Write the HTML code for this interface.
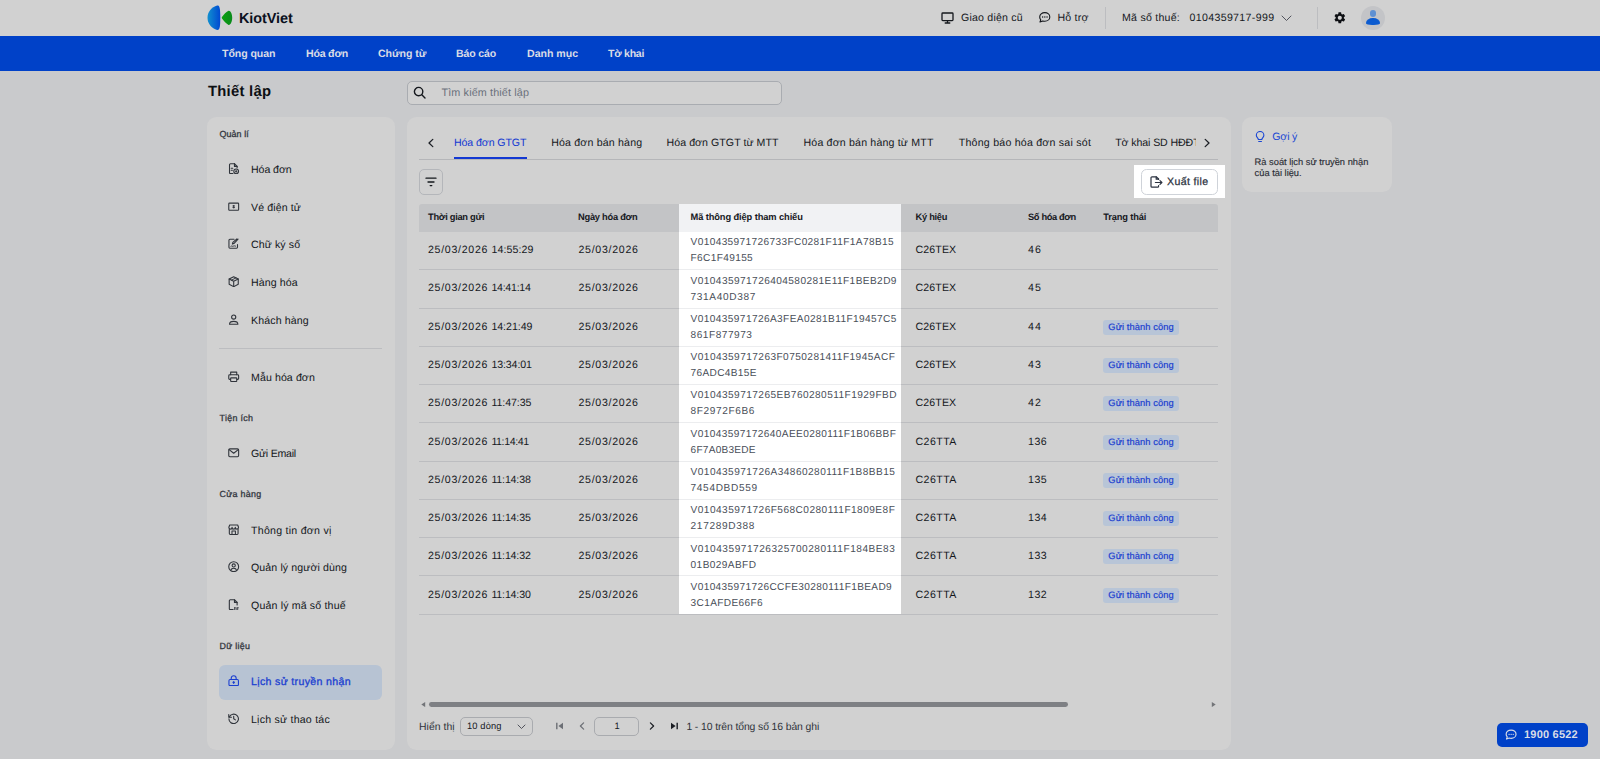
<!DOCTYPE html>
<html lang="vi">
<head>
<meta charset="utf-8">
<title>KiotViet - Thiết lập</title>
<style>
*{box-sizing:border-box;margin:0;padding:0}
html,body{width:1600px;height:759px;overflow:hidden}
body{background:#c9cacc;font-family:"Liberation Sans",sans-serif;text-rendering:geometricPrecision;color:#14171c;position:relative;font-size:10.6px}
.abs{position:absolute}
.t{position:absolute;white-space:nowrap;line-height:1}
/* header */
#hdr{position:absolute;left:0;top:0;width:1600px;height:36px;background:#d1d1d1}
#nav{position:absolute;left:0;top:36px;width:1600px;height:35.4px;background:#0041c8}
#nav .t{color:#d9dce6;font-weight:bold;font-size:10.6px;top:13px}
.card{position:absolute;z-index:0}
.card::before{content:"";position:absolute;left:0;right:0;top:-0.45px;bottom:0;background:#d1d1d1;border-radius:9.5px;z-index:-1}
/* sidebar */
.sec{position:absolute;left:12.5px;font-size:8.9px;color:#33373e;-webkit-text-stroke:0.3px #33373e;white-space:nowrap;line-height:1;letter-spacing:-0.2px}
.mi{position:absolute;left:12px;width:163px;height:35px;border-radius:6px}
.mi .lb{position:absolute;left:32px;top:12.5px;font-size:10.6px;line-height:1;white-space:nowrap;color:#14171c}
.mi svg{position:absolute;left:9.4px;top:10.4px;width:11.4px;height:11.4px;stroke:#30343b;fill:none;stroke-width:1.15;stroke-linecap:round;stroke-linejoin:round}
.mi.on{background:#b7c3d3}
.mi.on .lb{color:#1b3fd0;-webkit-text-stroke:0.3px #1b3fd0}
.mi.on svg{stroke:#1b3fd0}
.tab{position:absolute;top:11px;font-size:10.6px;line-height:1;white-space:nowrap;color:#15181d}
.tab.on{color:#1338d2}
/* table */
.th{position:absolute;top:0;height:27.6px;line-height:27.6px;font-size:9.3px;font-weight:bold;color:#17191e;white-space:nowrap;letter-spacing:-0.15px}
.row{position:absolute;left:0;width:799px;border-bottom:1px solid #bcbdc0}
.c{position:absolute;white-space:nowrap;font-size:10.6px;line-height:16.2px;color:#15181d}
.code{position:absolute;left:271.6px;font-size:10.1px;line-height:16px;color:#4a4f59;white-space:nowrap}
.bdg{position:absolute;-webkit-text-stroke:0.2px #1a40d0;left:684.3px;letter-spacing:0.1px;height:15px;width:75.6px;border-radius:3px;background:#b8c5d7;color:#1a40d0;font-size:9.3px;line-height:15px;text-align:center;white-space:nowrap}
</style>
</head>
<body>
<!-- HEADER -->
<div id="hdr">
  <svg class="abs" style="left:207px;top:5px" width="26" height="26" viewBox="0 0 26 26">
    <defs>
      <linearGradient id="lgb" x1="0" y1="0" x2="1" y2="0"><stop offset="0" stop-color="#1190cf"/><stop offset="1" stop-color="#0049d2"/></linearGradient>
      <linearGradient id="lgg" x1="0" y1="0" x2="1" y2="0"><stop offset="0" stop-color="#0aa010"/><stop offset="1" stop-color="#0b8a1c"/></linearGradient>
    </defs>
    <path d="M10.2 0.6 C12.4 0.4 13.3 2.5 13.3 12.8 C13.3 23 12.4 25.2 10.2 25 C4.6 23.6 0.5 18.6 0.5 12.8 C0.5 7 4.6 2 10.2 0.6Z" fill="url(#lgb)"/>
    <path d="M15 12.1 C16.5 9.8 19.5 6.6 21.6 5.8 C23.4 5.4 25.2 8.6 25.2 12.8 C25.2 17 23.4 20.3 21.6 19.9 C19.5 19.1 16.5 15.9 15 13.6 C14.6 13 14.6 12.7 15 12.1Z" fill="url(#lgg)"/>
  </svg>
  <div class="t" style="left:239px;top:11.5px;font-size:14.4px;font-weight:bold;color:#0a1020;letter-spacing:-0.06px">KiotViet</div>
  <svg class="abs" style="left:941px;top:11.5px" width="13" height="12" viewBox="0 0 13 12" fill="none" stroke="#15181d" stroke-width="1.300" stroke-linecap="round" stroke-linejoin="round"><rect x="1" y="1" width="11" height="7.600" rx="0.800"/><path d="M4.200 11H8.800M6.500 8.800V11"/></svg>
  <div class="t" style="left:961px;top:13px;font-size:10.6px;color:#15181d;letter-spacing:0.2px">Giao diện cũ</div>
  <svg class="abs" style="left:1037.5px;top:11px" width="13" height="13" viewBox="0 0 13 13" fill="none" stroke="#15181d" stroke-width="1.100" stroke-linecap="round" stroke-linejoin="round"><path d="M6.800 1.600c2.900 0 5 1.900 5 4.300s-2.100 4.300-5 4.300c-.7 0-1.300-.1-1.900-.3L2 11l.8-2.200C2.100 8 1.700 7 1.700 5.900c0-2.400 2.200-4.300 5.100-4.300Z"/><path d="M4.600 6h.1M6.800 6h.1M9 6h.1" stroke-width="1.300"/></svg>
  <div class="t" style="left:1057.5px;top:13px;font-size:10.6px;color:#15181d;letter-spacing:0.2px">Hỗ trợ</div>
  <div class="abs" style="left:1105px;top:7px;width:1px;height:22px;background:#bcbdc0"></div>
  <div class="t" style="left:1122px;top:13px;font-size:10.6px;color:#15181d;letter-spacing:0.24px">Mã số thuế:</div>
  <div class="t" style="left:1189.5px;top:13px;font-size:10.6px;color:#15181d;letter-spacing:0.34px">0104359717-999</div>
  <svg class="abs" style="left:1281px;top:14.500px" width="11" height="7" viewBox="0 0 11 7" fill="none" stroke="#4a4c55" stroke-width="0.950" stroke-linecap="round" stroke-linejoin="round"><path d="M1 1l4.500 4.500L10 1"/></svg>
  <div class="abs" style="left:1317px;top:7px;width:1px;height:22px;background:#bcbdc0"></div>
  <svg class="abs" style="left:1332.7px;top:11.2px" width="13.6" height="13.600" viewBox="0 0 24 24"><path fill="#0d0f13" d="M19.140 12.940c.04-.3.060-.610.060-.940 0-.320-.020-.640-.070-.940l2.030-1.580a.49.49 0 0 0 .12-.610l-1.920-3.320a.488.488 0 0 0-.590-.220l-2.390.960c-.5-.380-1.030-.7-1.620-.940l-.360-2.540a.484.484 0 0 0-.480-.410h-3.840c-.240 0-.43.170-.47.410l-.360 2.540c-.590.240-1.130.570-1.620.940l-2.390-.960c-.220-.080-.470 0-.590.220L2.740 8.870c-.12.210-.08.470.12.610l2.030 1.580c-.050.300-.090.630-.090.940s.020.640.070.940l-2.030 1.580a.49.49 0 0 0-.12.610l1.920 3.320c.12.220.37.290.59.220l2.390-.960c.5.380 1.030.7 1.620.940l.360 2.540c.05.240.24.410.48.410h3.840c.240 0 .44-.17.470-.410l.360-2.540c.590-.240 1.130-.560 1.620-.940l2.390.960c.22.080.47 0 .59-.220l1.920-3.320c.12-.220.070-.470-.12-.610l-2.010-1.580zM12 15.600c-1.980 0-3.600-1.620-3.600-3.600s1.620-3.600 3.600-3.600 3.600 1.620 3.600 3.600-1.620 3.600-3.600 3.600z"/></svg>
  <div class="abs" style="left:1361px;top:5.7px;width:24px;height:24px;border-radius:12px;background:#c3c4c7;overflow:hidden">
    <div class="abs" style="left:8.5px;top:4.4px;width:6.6px;height:6.6px;border-radius:50%;background:#5e90d2"></div>
    <div class="abs" style="left:5.3px;top:12.8px;width:13.5px;height:6.6px;border-radius:50% 50% 45% 45% / 75% 75% 25% 25%;background:#0b5bd0"></div>
  </div>
</div>
<!-- NAV -->
<div id="nav">
  <div class="t" style="left:222px;letter-spacing:-0.08px">Tổng quan</div>
  <div class="t" style="left:306px;letter-spacing:-0.21px">Hóa đơn</div>
  <div class="t" style="left:378px;letter-spacing:-0.06px">Chứng từ</div>
  <div class="t" style="left:456px;letter-spacing:-0.15px">Báo cáo</div>
  <div class="t" style="left:527px;letter-spacing:-0.02px">Danh mục</div>
  <div class="t" style="left:608px;letter-spacing:-0.29px">Tờ khai</div>
</div>
<!-- TITLE + SEARCH -->
<div class="t" style="left:208px;top:84.9px;font-size:14.8px;font-weight:bold;color:#0d0f13;letter-spacing:0.27px">Thiết lập</div>
<div class="abs" style="left:407px;top:81px;width:375px;height:24px;border:1px solid #a9acb1;border-radius:5px;background:#d1d1d1"></div>
<svg class="abs" style="left:413px;top:86px" width="13" height="13" viewBox="0 0 13 13" fill="none" stroke="#15181d" stroke-width="1.4" stroke-linecap="round"><circle cx="5.6" cy="5.6" r="4.2"/><path d="M8.8 8.8 L12 12"/></svg>
<div class="t" style="left:441.5px;top:88px;font-size:10.8px;color:#6a707b;letter-spacing:0.13px">Tìm kiếm thiết lập</div>

<!-- SIDEBAR -->
<div class="card" id="side" style="left:207px;top:117px;width:187.8px;height:632.8px">

  <div class="sec" style="top:13.1px;letter-spacing:0.11px">Quản lí</div>
  <div class="mi" style="top:35.5px"><svg viewBox="0 0 12 12"><path d="M6.8 0.8H2.6a1 1 0 0 0-1 1v8.4a1 1 0 0 0 1 1h2.6"/><path d="M6.8 0.8L9.6 3.6V5"/><path d="M6.8 0.8V3.6H9.6"/><path d="M3.4 5.6H5M3.4 7.6H4.6"/><circle cx="8.6" cy="8.8" r="2.5"/><path d="M8.6 7.9v1.8M7.9 8.8h1.4" stroke-width="1"/></svg><span class="lb" style=";letter-spacing:-0.07px">Hóa đơn</span></div>
  <div class="mi" style="top:73.5px"><svg viewBox="0 0 12 12"><rect x="0.8" y="2.2" width="10.4" height="7.6" rx="0.8"/><path d="M6 4.6v2.8M5.2 5.2h1.6M5.2 6.8h1.6" stroke-width="1"/></svg><span class="lb" style=";letter-spacing:0.1px">Vé điện tử</span></div>
  <div class="mi" style="top:110.5px"><svg viewBox="0 0 12 12"><path d="M10 6.8v3a1 1 0 0 1-1 1H2a1 1 0 0 1-1-1V2.4a1 1 0 0 1 1-1h4.4"/><path d="M10.6 1.2L6.2 5.8 4.6 6.4l.5-1.7L9.4 0.9"/><path d="M3 8.6c.8-.8 1.6.6 2.6 0s1.600-.2 2.4 0" stroke-width="1"/></svg><span class="lb" style=";letter-spacing:0.1px">Chữ ký số</span></div>
  <div class="mi" style="top:148.5px"><svg viewBox="0 0 12 12"><path d="M6 0.800L10.800 3.200V8.800L6 11.200 1.200 8.800V3.200Z"/><path d="M1.200 3.200L6 5.600 10.800 3.200M6 5.600V11.200"/><path d="M8.400 2L3.600 4.400" stroke-width="1"/></svg><span class="lb" style=";letter-spacing:0.11px">Hàng hóa</span></div>
  <div class="mi" style="top:186.5px"><svg viewBox="0 0 12 12"><circle cx="6" cy="3.200" r="2.200"/><path d="M1.600 10.800c0-2 1.400-3 4.400-3s4.400 1 4.400 3Z"/></svg><span class="lb" style=";letter-spacing:0.13px">Khách hàng</span></div>
  <div class="abs" style="left:12px;top:231px;width:163px;height:1px;background:#bcbdc0"></div>
  <div class="mi" style="top:243.5px"><svg viewBox="0 0 12 12"><path d="M2.800 4V1.200h6.400V4"/><rect x="0.800" y="4" width="10.400" height="4.800" rx="1"/><rect x="2.800" y="7.200" width="6.400" height="3.800" rx="0.500" fill="#d1d1d1"/></svg><span class="lb" style=";letter-spacing:0.09px">Mẫu hóa đơn</span></div>
  <div class="sec" style="top:296.8px;letter-spacing:0.32px">Tiện ích</div>
  <div class="mi" style="top:319.5px"><svg viewBox="0 0 12 12"><rect x="0.800" y="2" width="10.400" height="8.200" rx="1.200"/><path d="M1.200 2.800L6 6.600 10.800 2.800"/></svg><span class="lb" style=";letter-spacing:-0.25px">Gửi Email</span></div>
  <div class="sec" style="top:373.3px;letter-spacing:0.31px">Cửa hàng</div>
  <div class="mi" style="top:396.5px"><svg viewBox="0 0 12 12"><path d="M1.400 5.400V10a1 1 0 0 0 1 1h7.200a1 1 0 0 0 1-1V5.400"/><path d="M0.900 3.400L1.800 1h8.400l.9 2.400c0 1.200-.8 2-1.700 2s-1.700-.8-1.700-2c0 1.200-.8 2-1.700 2s-1.700-.8-1.700-2c0 1.200-.8 2-1.700 2S0.900 4.600.9 3.400Z"/><rect x="4.200" y="7.400" width="3.600" height="3.600" stroke-width="1.100"/></svg><span class="lb" style=";letter-spacing:0.26px">Thông tin đơn vị</span></div>
  <div class="mi" style="top:433.5px"><svg viewBox="0 0 12 12"><circle cx="6" cy="6" r="5.200"/><circle cx="6" cy="4.700" r="1.700"/><path d="M2.900 9.800c.5-1.500 1.600-2.100 3.100-2.100s2.600.6 3.100 2.100"/></svg><span class="lb" style=";letter-spacing:0.11px">Quản lý người dùng</span></div>
  <div class="mi" style="top:471.5px"><svg viewBox="0 0 12 12"><path d="M5.400 11.200H2.400a1 1 0 0 1-1-1V1.800a1 1 0 0 1 1-1h4.400l2.800 2.800v2.600"/><path d="M6.800 0.800V3.600h2.800"/><path d="M7 9.200v2M8.600 9.200v2M10.200 9.200v2M7 9.200h.6M10.200 9.200h.6" stroke-width="0.900"/></svg><span class="lb" style=";letter-spacing:0.16px">Quản lý mã số thuế</span></div>
  <div class="sec" style="top:524.5px;letter-spacing:0.28px">Dữ liệu</div>
  <div class="mi on" style="top:547.5px"><svg viewBox="0 0 12 12"><rect x="1" y="4.800" width="10" height="6.400" rx="1.200"/><path d="M3.400 4.800V3.400a2.600 2.600 0 0 1 5.200 0V4.800"/><path d="M6 7.200v1.800M5.200 7.800L6 7l.8.800" stroke-width="1.100"/></svg><span class="lb" style=";letter-spacing:0.33px">Lịch sử truyền nhận</span></div>
  <div class="mi" style="top:585.5px"><svg viewBox="0 0 12 12"><path d="M1.400 4.200A5 5 0 1 1 1 6"/><path d="M0.800 1.600v2.800h2.800"/><path d="M6 3.400V6l1.800 1.200"/></svg><span class="lb" style=";letter-spacing:0.22px">Lịch sử thao tác</span></div>
</div>

<!-- MAIN -->
<div class="card" id="main" style="left:407px;top:117px;width:823.8px;height:632.8px">

  <!-- tabs -->
  <svg class="abs" style="left:20px;top:21px" width="8" height="10" viewBox="0 0 8 10" fill="none" stroke="#1b1e24" stroke-width="1.3" stroke-linecap="round" stroke-linejoin="round"><path d="M5.800 1.400L2 5l3.800 3.600"/></svg>
  <div class="abs" style="left:12px;top:42px;width:799px;height:1px;background:#b5b6b9"></div>
  <div class="tabs abs" style="left:40px;top:10px;width:749px;height:32px;overflow:hidden">
    <div class="tab on" style="left:7px;letter-spacing:-0.09px">Hóa đơn GTGT</div>
    <div class="tab" style="left:104.2px;letter-spacing:0.18px">Hóa đơn bán hàng</div>
    <div class="tab" style="left:219.6px;letter-spacing:0.05px">Hóa đơn GTGT từ MTT</div>
    <div class="tab" style="left:356.5px;letter-spacing:0.18px">Hóa đơn bán hàng từ MTT</div>
    <div class="tab" style="left:511.8px;letter-spacing:0.23px">Thông báo hóa đơn sai sót</div>
    <div class="tab" style="left:668.2px;letter-spacing:-0.1px">Tờ khai SD HĐĐT</div>
  </div>
  <div class="abs" style="left:47px;top:40px;width:72.5px;height:2px;background:#1338d2"></div>
  <svg class="abs" style="left:796px;top:21px" width="8" height="10" viewBox="0 0 8 10" fill="none" stroke="#1b1e24" stroke-width="1.300" stroke-linecap="round" stroke-linejoin="round"><path d="M2.200 1.400L6 5 2.200 8.600"/></svg>
  <!-- filter btn -->
  <div class="abs" style="left:12px;top:52px;width:24px;height:25.5px;border:1px solid #b4b6ba;border-radius:5px"></div>
  <svg class="abs" style="left:18px;top:59px" width="12" height="12" viewBox="0 0 12 12" fill="none" stroke="#15181d" stroke-width="1.300" stroke-linecap="round"><path d="M1 2.200H11M3 6H9M5.200 9.600H6.800"/></svg>
  <!-- export highlight -->
  <div class="abs" style="left:727px;top:48px;width:91px;height:33px;background:#fff"></div>
  <div class="abs" style="left:734px;top:52px;width:77px;height:26px;border:1px solid #cfd3d9;border-radius:5.5px;background:#fff"></div>
  <svg class="abs" style="left:742.5px;top:58.8px" width="13" height="12" viewBox="0 0 13 12" fill="none" stroke="#2b3240" stroke-width="1.200" stroke-linecap="round" stroke-linejoin="round"><path d="M8.600 3.400V3L6.400 0.800H2a1 1 0 0 0-1 1v8.400a1 1 0 0 0 1 1h5.600a1 1 0 0 0 1-1V9.600"/><path d="M6.200 0.900V3.200H8.500"/><path d="M5.400 6.500H11.800M10 4.600l1.900 1.900L10 8.400"/></svg>
  <div class="t" style="left:760px;top:60px;font-size:10.6px;color:#2b3240;-webkit-text-stroke:0.25px #2b3240;letter-spacing:0.36px">Xuất file</div>

  <!-- table -->
  <div class="abs" id="tbl" style="left:12px;top:87px;width:799px;height:412px">
    <div class="abs" style="left:0;top:0;width:799px;height:28px;background:#c3c4c6;border-radius:3px 3px 0 0"></div>
    <div class="abs" style="left:260px;top:0;width:222px;height:28px;background:#f1f2f4"></div>
    <div class="abs" style="left:260px;top:28px;width:222px;height:382.80px;background:#fff"></div>
    <div class="th" style="left:9px;letter-spacing:-0.28px">Thời gian gửi</div>
    <div class="th" style="left:159px;letter-spacing:-0.25px">Ngày hóa đơn</div>
    <div class="th" style="left:271.5px;letter-spacing:-0.1px">Mã thông điệp tham chiếu</div>
    <div class="th" style="left:496.5px;letter-spacing:-0.28px">Ký hiệu</div>
    <div class="th" style="left:609px;letter-spacing:-0.36px">Số hóa đơn</div>
    <div class="th" style="left:684.3px;letter-spacing:-0.15px">Trạng thái</div>
    <div class="row" style="top:28.00px;height:38.27px">
      <div class="c" style="left:9px;top:10.2px"><span style="letter-spacing:0.712px">25/03/2026</span><span style="position:absolute;left:63.4px;letter-spacing:0.12px">14:55:29</span></div><div class="c" style="left:159.5px;top:10.2px;letter-spacing:0.712px">25/03/2026</div>
      <div class="code" style="top:3.4px"><span style="letter-spacing:0.369px">V010435971726733FC0281F11F1A78B15</span><br><span style="letter-spacing:0.358px">F6C1F49155</span></div>
      <div class="c" style="left:496.5px;top:10.2px;letter-spacing:0.126px">C26TEX</div><div class="c" style="left:609px;top:10.2px;letter-spacing:1.0px">46</div>
      <div class="abs" style="left:260px;bottom:-1px;width:222px;height:1px;background:#ecedef"></div>
    </div>
    <div class="row" style="top:66.27px;height:38.27px">
      <div class="c" style="left:9px;top:10.2px"><span style="letter-spacing:0.712px">25/03/2026</span><span style="position:absolute;left:63.4px;letter-spacing:-0.248px">14:41:14</span></div><div class="c" style="left:159.5px;top:10.2px;letter-spacing:0.712px">25/03/2026</div>
      <div class="code" style="top:3.4px"><span style="letter-spacing:0.424px">V010435971726404580281E11F1BEB2D9</span><br><span style="letter-spacing:0.636px">731A40D387</span></div>
      <div class="c" style="left:496.5px;top:10.2px;letter-spacing:0.126px">C26TEX</div><div class="c" style="left:609px;top:10.2px;letter-spacing:1.0px">45</div>
      <div class="abs" style="left:260px;bottom:-1px;width:222px;height:1px;background:#ecedef"></div>
    </div>
    <div class="row" style="top:104.54px;height:38.27px">
      <div class="c" style="left:9px;top:10.2px"><span style="letter-spacing:0.712px">25/03/2026</span><span style="position:absolute;left:63.4px;letter-spacing:-0.031px">14:21:49</span></div><div class="c" style="left:159.5px;top:10.2px;letter-spacing:0.712px">25/03/2026</div>
      <div class="code" style="top:3.4px"><span style="letter-spacing:0.405px">V010435971726A3FEA0281B11F19457C5</span><br><span style="letter-spacing:0.521px">861F877973</span></div>
      <div class="c" style="left:496.5px;top:10.2px;letter-spacing:0.126px">C26TEX</div><div class="c" style="left:609px;top:10.2px;letter-spacing:1.0px">44</div>
      <div class="bdg" style="top:11.3px;letter-spacing:0.1px">Gửi thành công</div>
      <div class="abs" style="left:260px;bottom:-1px;width:222px;height:1px;background:#ecedef"></div>
    </div>
    <div class="row" style="top:142.81px;height:38.27px">
      <div class="c" style="left:9px;top:10.2px"><span style="letter-spacing:0.712px">25/03/2026</span><span style="position:absolute;left:63.4px;letter-spacing:-0.104px">13:34:01</span></div><div class="c" style="left:159.5px;top:10.2px;letter-spacing:0.712px">25/03/2026</div>
      <div class="code" style="top:3.4px"><span style="letter-spacing:0.443px">V0104359717263F0750281411F1945ACF</span><br><span style="letter-spacing:0.329px">76ADC4B15E</span></div>
      <div class="c" style="left:496.5px;top:10.2px;letter-spacing:0.126px">C26TEX</div><div class="c" style="left:609px;top:10.2px;letter-spacing:1.0px">43</div>
      <div class="bdg" style="top:11.3px;letter-spacing:0.1px">Gửi thành công</div>
      <div class="abs" style="left:260px;bottom:-1px;width:222px;height:1px;background:#ecedef"></div>
    </div>
    <div class="row" style="top:181.08px;height:38.27px">
      <div class="c" style="left:9px;top:10.2px"><span style="letter-spacing:0.712px">25/03/2026</span><span style="position:absolute;left:63.4px;letter-spacing:-0.051px">11:47:35</span></div><div class="c" style="left:159.5px;top:10.2px;letter-spacing:0.712px">25/03/2026</div>
      <div class="code" style="top:3.4px"><span style="letter-spacing:0.442px">V0104359717265EB760280511F1929FBD</span><br><span style="letter-spacing:0.602px">8F2972F6B6</span></div>
      <div class="c" style="left:496.5px;top:10.2px;letter-spacing:0.126px">C26TEX</div><div class="c" style="left:609px;top:10.2px;letter-spacing:1.0px">42</div>
      <div class="bdg" style="top:11.3px;letter-spacing:0.1px">Gửi thành công</div>
      <div class="abs" style="left:260px;bottom:-1px;width:222px;height:1px;background:#ecedef"></div>
    </div>
    <div class="row" style="top:219.35px;height:38.27px">
      <div class="c" style="left:9px;top:10.2px"><span style="letter-spacing:0.712px">25/03/2026</span><span style="position:absolute;left:63.4px;letter-spacing:-0.389px">11:14:41</span></div><div class="c" style="left:159.5px;top:10.2px;letter-spacing:0.712px">25/03/2026</div>
      <div class="code" style="top:3.4px"><span style="letter-spacing:0.394px">V01043597172640AEE0280111F1B06BBF</span><br><span style="letter-spacing:0.232px">6F7A0B3EDE</span></div>
      <div class="c" style="left:496.5px;top:10.2px;letter-spacing:0.436px">C26TTA</div><div class="c" style="left:609px;top:10.2px;letter-spacing:0.536px">136</div>
      <div class="bdg" style="top:11.3px;letter-spacing:0.1px">Gửi thành công</div>
      <div class="abs" style="left:260px;bottom:-1px;width:222px;height:1px;background:#ecedef"></div>
    </div>
    <div class="row" style="top:257.62px;height:38.27px">
      <div class="c" style="left:9px;top:10.2px"><span style="letter-spacing:0.712px">25/03/2026</span><span style="position:absolute;left:63.4px;letter-spacing:-0.151px">11:14:38</span></div><div class="c" style="left:159.5px;top:10.2px;letter-spacing:0.712px">25/03/2026</div>
      <div class="code" style="top:3.4px"><span style="letter-spacing:0.45px">V010435971726A34860280111F1B8BB15</span><br><span style="letter-spacing:0.647px">7454DBD559</span></div>
      <div class="c" style="left:496.5px;top:10.2px;letter-spacing:0.436px">C26TTA</div><div class="c" style="left:609px;top:10.2px;letter-spacing:0.536px">135</div>
      <div class="bdg" style="top:11.3px;letter-spacing:0.1px">Gửi thành công</div>
      <div class="abs" style="left:260px;bottom:-1px;width:222px;height:1px;background:#ecedef"></div>
    </div>
    <div class="row" style="top:295.89px;height:38.27px">
      <div class="c" style="left:9px;top:10.2px"><span style="letter-spacing:0.712px">25/03/2026</span><span style="position:absolute;left:63.4px;letter-spacing:-0.151px">11:14:35</span></div><div class="c" style="left:159.5px;top:10.2px;letter-spacing:0.712px">25/03/2026</div>
      <div class="code" style="top:3.4px"><span style="letter-spacing:0.465px">V010435971726F568C0280111F1809E8F</span><br><span style="letter-spacing:0.657px">217289D388</span></div>
      <div class="c" style="left:496.5px;top:10.2px;letter-spacing:0.436px">C26TTA</div><div class="c" style="left:609px;top:10.2px;letter-spacing:0.536px">134</div>
      <div class="bdg" style="top:11.3px;letter-spacing:0.1px">Gửi thành công</div>
      <div class="abs" style="left:260px;bottom:-1px;width:222px;height:1px;background:#ecedef"></div>
    </div>
    <div class="row" style="top:334.16px;height:38.27px">
      <div class="c" style="left:9px;top:10.2px"><span style="letter-spacing:0.712px">25/03/2026</span><span style="position:absolute;left:63.4px;letter-spacing:-0.151px">11:14:32</span></div><div class="c" style="left:159.5px;top:10.2px;letter-spacing:0.712px">25/03/2026</div>
      <div class="code" style="top:3.4px"><span style="letter-spacing:0.517px">V010435971726325700280111F184BE83</span><br><span style="letter-spacing:0.403px">01B029ABFD</span></div>
      <div class="c" style="left:496.5px;top:10.2px;letter-spacing:0.436px">C26TTA</div><div class="c" style="left:609px;top:10.2px;letter-spacing:0.536px">133</div>
      <div class="bdg" style="top:11.3px;letter-spacing:0.1px">Gửi thành công</div>
      <div class="abs" style="left:260px;bottom:-1px;width:222px;height:1px;background:#ecedef"></div>
    </div>
    <div class="row" style="top:372.43px;height:38.27px">
      <div class="c" style="left:9px;top:10.2px"><span style="letter-spacing:0.712px">25/03/2026</span><span style="position:absolute;left:63.4px;letter-spacing:-0.151px">11:14:30</span></div><div class="c" style="left:159.5px;top:10.2px;letter-spacing:0.712px">25/03/2026</div>
      <div class="code" style="top:3.4px"><span style="letter-spacing:0.363px">V010435971726CCFE30280111F1BEAD9</span><br><span style="letter-spacing:0.369px">3C1AFDE66F6</span></div>
      <div class="c" style="left:496.5px;top:10.2px;letter-spacing:0.436px">C26TTA</div><div class="c" style="left:609px;top:10.2px;letter-spacing:0.536px">132</div>
      <div class="bdg" style="top:11.3px;letter-spacing:0.1px">Gửi thành công</div>
    </div>
  </div>

  <!-- scrollbar -->
  <svg class="abs" style="left:14px;top:585px" width="5" height="5.2" viewBox="0 0 5 5.2"><path d="M4.2 0.1V5.1L0.3 2.6Z" fill="#727478"/></svg>
  <div class="abs" style="left:22.1px;top:585.1px;width:639px;height:4.8px;border-radius:2.4px;background:#7e8084"></div>
  <svg class="abs" style="left:804px;top:585px" width="5" height="5.2" viewBox="0 0 5 5.2"><path d="M0.8 0.1V5.1L4.7 2.6Z" fill="#727478"/></svg>
  <!-- pager -->
  <div class="t" style="left:12px;top:606px;font-size:10.4px;color:#2f333a;letter-spacing:0.04px">Hiển thị</div>
  <div class="abs" style="left:53px;top:600px;width:72.5px;height:18.5px;border:1px solid #a9abaf;border-radius:5px"></div>
  <div class="t" style="left:60px;top:605px;font-size:9.3px;color:#15181d;letter-spacing:0.15px">10 dòng</div>
  <svg class="abs" style="left:109.600px;top:606.500px" width="9" height="6" viewBox="0 0 9 6" fill="none" stroke="#4a4c55" stroke-width="0.950" stroke-linecap="round" stroke-linejoin="round"><path d="M1 1l3.500 3.500L8 1"/></svg>
  <svg class="abs" style="left:149px;top:605px" width="8" height="8" viewBox="0 0 8 8"><path d="M0.800 0.800V7.200" stroke="#6c6f75" stroke-width="1.400" fill="none"/><path d="M7 0.800V7.200L2.400 4Z" fill="#6c6f75"/></svg>
  <svg class="abs" style="left:171.5px;top:605px" width="6" height="8" viewBox="0 0 6 8" fill="none" stroke="#6c6f75" stroke-width="1.200" stroke-linecap="round" stroke-linejoin="round"><path d="M4.600 0.800L1.400 4l3.200 3.200"/></svg>
  <div class="abs" style="left:187px;top:600px;width:45px;height:18.5px;border:1px solid #a9abaf;border-radius:5px"></div>
  <div class="t" style="left:207.5px;top:605px;font-size:9.3px;color:#15181d">1</div>
  <svg class="abs" style="left:241.5px;top:605px" width="6" height="8" viewBox="0 0 6 8" fill="none" stroke="#1b1e24" stroke-width="1.200" stroke-linecap="round" stroke-linejoin="round"><path d="M1.400 0.800L4.600 4 1.400 7.200"/></svg>
  <svg class="abs" style="left:262.5px;top:605px" width="8" height="8" viewBox="0 0 8 8"><path d="M7.200 0.800V7.200" stroke="#1b1e24" stroke-width="1.400" fill="none"/><path d="M1 0.800V7.200L5.600 4Z" fill="#1b1e24"/></svg>
  <div class="t" style="left:279.4px;top:606px;font-size:10.4px;color:#2f333a;letter-spacing:-0.1px">1 - 10 trên tổng số 16 bản ghi</div>

</div>

<!-- TIP -->
<div class="card" id="tip" style="left:1242.3px;top:117px;width:150.2px;height:75.2px">
  <svg class="abs" style="left:12.5px;top:13.5px" width="10.2" height="12" viewBox="0 0 11 13" fill="none" stroke="#1a46d4" stroke-width="1.200" stroke-linecap="round" stroke-linejoin="round"><path d="M3.600 9.200C3.600 7.800 1.400 7 1.400 4.600a4.100 4.100 0 0 1 8.200 0C9.600 7 7.400 7.800 7.400 9.200Z"/><path d="M4 11.400H7"/></svg>
  <div class="t" style="left:30px;top:15px;font-size:10.6px;color:#1a46d4;letter-spacing:-0.17px">Gợi ý</div>
  <div class="abs" style="left:12.3px;top:39.5px;font-size:9.3px;line-height:11.6px;color:#2b2e35;-webkit-text-stroke:0.15px #2b2e35;white-space:nowrap">Rà soát lịch sử truyền nhận<br>của tài liệu.</div>
</div>

<!-- CHAT -->
<div class="abs" id="chat" style="left:1497px;top:723px;width:91px;height:24px;background:#0041c8;border-radius:5px">
  <svg class="abs" style="left:8px;top:6.3px" width="12.2" height="11.2" viewBox="0 0 13 12" fill="none" stroke="#d9dde7" stroke-width="1.25" stroke-linecap="round" stroke-linejoin="round"><path d="M6.500 1.200c3 0 5.300 1.900 5.300 4.400S9.500 10 6.500 10c-.7 0-1.400-.1-2-.3L1.600 10.800l.8-2.300C1.600 7.700 1.200 6.700 1.200 5.600c0-2.500 2.300-4.400 5.300-4.400Z"/><path d="M4.300 5.700h.1M6.500 5.700h.1M8.700 5.700h.1" stroke-width="1.400"/></svg>
  <div class="t" style="left:27px;top:6.5px;font-size:11px;font-weight:bold;color:#d9dde7;letter-spacing:0.21px">1900 6522</div>
</div>
</body>
</html>
